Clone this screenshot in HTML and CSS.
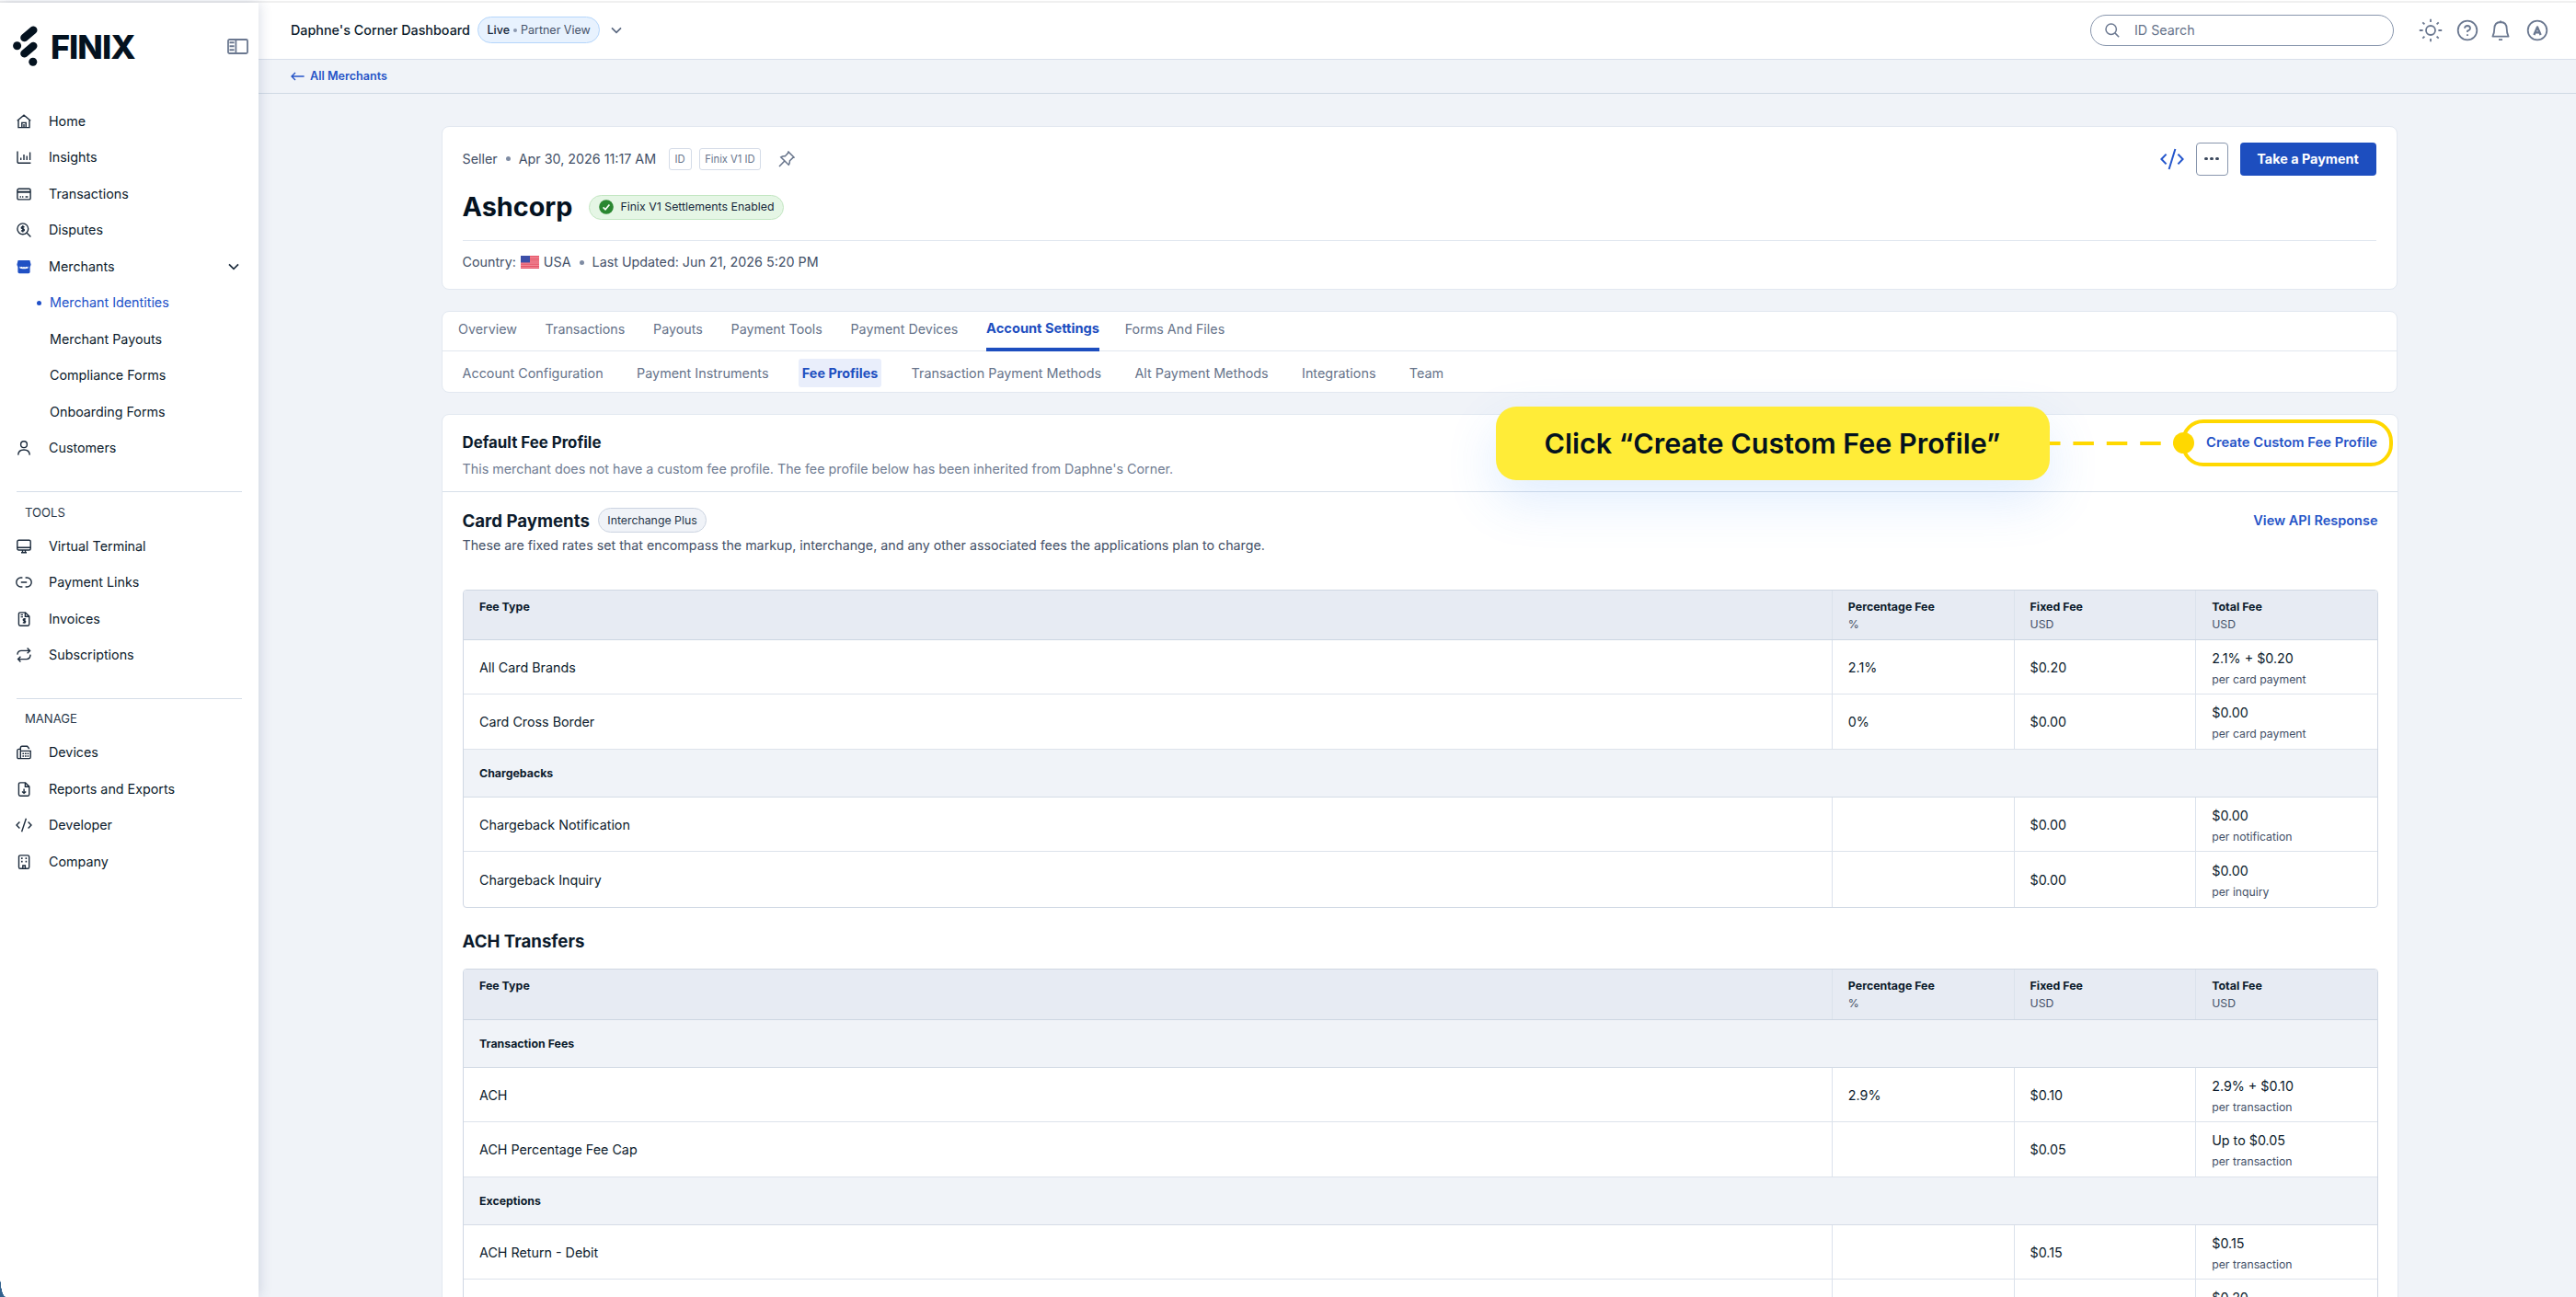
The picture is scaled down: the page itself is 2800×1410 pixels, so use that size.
FILE: index.html
```html
<!DOCTYPE html>
<html lang="en">
<head>
<meta charset="UTF-8">
<meta name="viewport" content="width=device-width, initial-scale=1.0">
<title>Ashcorp - Fee Profiles</title>
<link rel="stylesheet" href="styles.css">
</head>
<body>
<div class="top-strip"></div>
<div class="app">
  <aside class="sidebar">
    <div class="brand">
      <svg class="brand-mark" viewBox="0 0 27 44">
        <path d="M12.5 13L22.2 4.8" stroke="#04121f" stroke-width="8.6" stroke-linecap="round"/>
        <path d="M12.5 30.2L22.2 22" stroke="#04121f" stroke-width="8.6" stroke-linecap="round"/>
        <circle cx="4.6" cy="21.7" r="4.5"/>
        <circle cx="21.8" cy="39.2" r="4.5"/>
      </svg>
      <span class="brand-name">FINIX</span>
      <svg class="collapse" viewBox="0 0 23 17" stroke="#6b7890" stroke-width="1.8">
        <rect x="1" y="1" width="21" height="15" rx="1.5"/>
        <path d="M9.4 1V16"/>
        <path d="M2.5 4.3H7.6M2.5 8.3H7.6M2.5 12.3H7.6" stroke-width="2"/>
      </svg>
    </div>

    <nav class="menu">
      <a class="item"><svg class="icon" viewBox="0 0 16 16"><path d="M.8 7.2L8 1.2l7.2 6M2 6.4V14.6H14V6.4M5.8 14.4V9.4h4.4v5M8 11v3"/></svg>Home</a>
      <a class="item"><svg class="icon" viewBox="0 0 16 16"><path d="M1 1.5V12.4Q1 14.3 3 14.3H15.4M4.7 11V8.4M8 11V5M11.2 11V6.6M14.6 11V2.5"/></svg>Insights</a>
      <a class="item"><svg class="icon" viewBox="0 0 16 16"><rect x=".9" y="2.3" width="14.2" height="11.6" rx="1.5"/><path d="M1 5.7H15" stroke-width="2"/><path d="M3.6 11H5M6 11H7.4M9.6 11H12.4"/></svg>Transactions</a>
      <a class="item"><svg class="icon" viewBox="0 0 16 16"><circle cx="6.8" cy="6.8" r="5.9"/><path d="M11.2 11.2L15.4 15.4M8.6 5Q6.8 3.9 5.5 4.9 4.7 6.4 6.8 6.8 9 7.3 8.1 8.7 6.8 9.7 5 8.7M6.8 3V10.6"/></svg>Disputes</a>
      <a class="item"><svg class="icon icon-shop" viewBox="0 0 16 16"><path d="M1.6 1H14.4L15.6 5.6Q15.7 7.6 13.6 8.2 11.8 8.4 10.9 7.3 9.6 8.4 8 8.3 6.4 8.4 5.1 7.3 4.2 8.4 2.4 8.2.3 7.6.4 5.6Z"/><path d="M1.4 7H14.6V13.6Q14.6 15.2 13 15.2H3Q1.4 15.2 1.4 13.6Z"/><path class="awning" d="M3.4 7.6Q4.4 8.9 5.6 7.8 6.6 9.2 8 8.1 9.4 9.2 10.4 7.8 11.6 8.9 12.6 7.6V9.6Q10.4 10.6 8 10.2 5.6 10.6 3.4 9.6Z"/></svg>Merchants<svg class="caret" viewBox="0 0 12 8"><path d="M1 1.4L6 6.4 11 1.4"/></svg></a>
      <a class="item sub active">Merchant Identities</a>
      <a class="item sub">Merchant Payouts</a>
      <a class="item sub">Compliance Forms</a>
      <a class="item sub">Onboarding Forms</a>
      <a class="item"><svg class="icon" viewBox="0 0 16 16"><circle cx="8" cy="4.2" r="3.4"/><path d="M1.7 15.6Q2 10 8 10 14 10 14.3 15.6"/></svg>Customers</a>
    </nav>

    <nav class="menu group">
      <div class="group-title">TOOLS</div>
      <a class="item"><svg class="icon" viewBox="0 0 16 16"><rect x=".8" y="1.2" width="14.4" height="10.8" rx="1.5"/><path d="M1 9.2H15M5 14.8H11M6.5 12V14.6M9.5 12V14.6"/></svg>Virtual Terminal</a>
      <a class="item"><svg class="icon icon-wide" viewBox="0 0 18 16"><path d="M7.4 3H5.6A4.8 5 0 0 0 5.6 13H7.4M10.6 3H12.4A4.8 5 0 0 1 12.4 13H10.6M5.8 8H12.2"/></svg>Payment Links</a>
      <a class="item"><svg class="icon" viewBox="0 0 16 16"><path d="M4 .9H9.6L13.8 5V13.6Q13.8 15.2 12.3 15.2H4Q2.4 15.2 2.4 13.6V2.4Q2.4.9 4 .9ZM9.4 1V5.2H13.6M4.6 3.4H7M4.6 5.6H7M10 8.2Q8.4 7.3 7.4 8.2 6.8 9.4 8.3 9.8 10.2 10.2 9.4 11.6 8.3 12.4 6.8 11.6M8.4 7V12.8"/></svg>Invoices</a>
      <a class="item"><svg class="icon" viewBox="0 0 16 16"><path d="M.9 7.6Q1.2 3.4 5.2 3.4H14.6M11.6.6L14.6 3.4 11.6 6.2M15.1 7.6Q14.8 12.6 10.8 12.6H1.6M4.4 9.8L1.6 12.6 4.4 15.4"/></svg>Subscriptions</a>
    </nav>

    <nav class="menu group">
      <div class="group-title">MANAGE</div>
      <a class="item"><svg class="icon" viewBox="0 0 16 16"><path d="M4.3 14.6V3Q4.3 1.2 6 1.2H11.6L13.8 4M4.3 6.4H15.2V13Q15.2 14.6 13.8 14.6H2.2Q.8 14.6.8 13V5.8Q.8 4.6 2.4 4.4H4"/><path d="M6.4 9.2H13.4M6.4 12H13.4" stroke-dasharray="1.7 .9"/></svg>Devices</a>
      <a class="item"><svg class="icon" viewBox="0 0 16 16"><path d="M4 .9H9.6L13.8 5V13.6Q13.8 15.2 12.3 15.2H4Q2.4 15.2 2.4 13.6V2.4Q2.4.9 4 .9ZM9.4 1V5.2H13.6M8.1 7.6V12M6 10.4L8.1 12.4 10.2 10.4"/></svg>Reports and Exports</a>
      <a class="item"><svg class="icon icon-wide" viewBox="0 0 18 16"><path d="M4.4 4.4L1 8l3.4 3.6M13.6 4.4L17 8l-3.4 3.6M11.4.8L6.6 15.2"/></svg>Developer</a>
      <a class="item"><svg class="icon" viewBox="0 0 16 16"><rect x="2.5" y=".9" width="11.2" height="14.4" rx="1.6"/><path d="M6.8 15V12H9.4V15"/><path d="M5 4.2H6.6M9.6 4.2H11.2M5 7.6H6.6M9.6 7.6H11.2" stroke-width="1.7"/></svg>Company</a>
    </nav>
    <span class="corner"></span>
  </aside>

  <div class="main">
    <header class="topbar">
      <span class="dash-name">Daphne's Corner Dashboard</span>
      <span class="env"><b>Live</b> <i></i> Partner View</span>
      <svg class="caret caret-gray" viewBox="0 0 12 8"><path d="M1 1.4L6 6.4 11 1.4"/></svg>
      <div class="search">
        <svg viewBox="0 0 16 16"><circle cx="6.7" cy="6.7" r="5.7"/><path d="M10.9 10.9L15.2 15.2"/></svg>
        ID Search
      </div>
      <div class="top-icons">
        <svg viewBox="0 0 26 26"><circle cx="13" cy="13" r="5"/><path d="M13 .8V4M13 22V25.2M.8 13H4.6M21.4 13H25.2M4.3 4.3L6.4 6.4M19.6 19.6L21.7 21.7M21.7 4.3L19.6 6.4M6.4 19.6L4.3 21.7"/></svg>
        <svg viewBox="0 0 26 26"><circle cx="13" cy="13" r="10.3"/><path d="M10 10.8Q10.2 8 13 8 15.9 8.1 16 10.7 15.9 12.6 13 13.6V15M13 17.2V19"/></svg>
        <svg class="bell" viewBox="0 0 26 26"><path d="M4.4 19.6Q6.3 16 6.3 11 6.5 4.2 13 4 19.5 4.2 19.7 11 19.7 16 21.6 19.6ZM13 2.4V4M11 23.2H15"/></svg>
        <svg viewBox="0 0 26 26"><circle cx="13" cy="13" r="10.3"/><path d="M9.4 18L13 9.4 16.6 18M10.6 15.4H15.4" stroke-width="2.4"/></svg>
      </div>
    </header>
    <div class="crumb">
      <svg viewBox="0 0 15 10"><path d="M14.6 5H1M5 1L1 5 5 9"/></svg>
      All Merchants
    </div>

    <div class="content">
      <section class="card profile">
        <div class="meta">
          <span>Seller</span><i class="dot"></i><span>Apr 30, 2026 11:17 AM</span>
          <span class="tag tag-id">ID</span><span class="tag">Finix V1 ID</span>
          <svg class="pin" viewBox="0 0 18 18"><path d="M11 1L17 7 15.6 7.6 12.4 10.8Q12.6 13.4 11.2 15.2L2.8 6.8Q5 5.4 7.4 5.8L10.4 2.6ZM6.6 11.2L1 17"/></svg>
          <div class="actions">
            <svg class="code" viewBox="0 0 26 24"><path d="M6.6 6.6L1.4 12l5.2 5.4M19.4 6.6L24.6 12l-5.2 5.4M16.4 1L9.6 23"/></svg>
            <button class="more"><i></i><i></i><i></i></button>
            <button class="pay">Take a Payment</button>
          </div>
        </div>
        <div class="title-row">
          <h1>Ashcorp</h1>
          <span class="badge"><svg viewBox="0 0 16 16"><circle cx="8" cy="8" r="7.8" fill="#2a8731"/><path d="M4.6 8.4L7 10.8 11.4 5.4" fill="none" stroke="#fff" stroke-width="1.6"/></svg>Finix V1 Settlements Enabled</span>
        </div>
        <div class="info">
          <span>Country:</span>
          <svg class="flag" viewBox="0 0 20 14"><rect width="20" height="14" fill="#f3a0ab"/><path d="M0 .6H20M0 2.8H20M0 4.9H20M0 7H20M0 9.2H20M0 11.3H20M0 13.4H20" stroke="#e54d62" stroke-width="1.2"/><rect width="10" height="7.4" fill="#3c4fa8"/></svg>
          <span>USA</span><i class="dot"></i><span>Last Updated: Jun 21, 2026 5:20 PM</span>
        </div>
      </section>

      <section class="card tabs-card">
        <div class="tabs">
          <a>Overview</a><a>Transactions</a><a>Payouts</a><a>Payment Tools</a><a>Payment Devices</a><a class="on">Account Settings</a><a>Forms And Files</a>
        </div>
        <div class="subtabs">
          <a>Account Configuration</a><a>Payment Instruments</a><a class="on">Fee Profiles</a><a>Transaction Payment Methods</a><a>Alt Payment Methods</a><a>Integrations</a><a>Team</a>
        </div>
      </section>

      <section class="card fees">
        <div class="fees-head">
          <div>
            <h3>Default Fee Profile</h3>
            <p>This merchant does not have a custom fee profile. The fee profile below has been inherited from Daphne's Corner.</p>
          </div>
          <a class="link create">Create Custom Fee Profile</a>
        </div>

        <div class="callout">
          <div class="callout-box">Click “Create Custom Fee Profile”</div>
          <svg class="callout-line" viewBox="0 0 135 4"><path d="M-11 2H135" stroke="#ffd800" stroke-width="4" stroke-dasharray="22.5 13.9"/></svg>
          <div class="callout-ring"></div>
          <i class="callout-dot"></i>
        </div>

        <div class="fees-body">
          <div class="section-head">
            <h2>Card Payments</h2><span class="chip">Interchange Plus</span>
            <a class="link">View API Response</a>
          </div>
          <p class="desc">These are fixed rates set that encompass the markup, interchange, and any other associated fees the applications plan to charge.</p>

          <div class="table">
            <div class="row head"><div>Fee Type</div><div>Percentage Fee<small>%</small></div><div>Fixed Fee<small>USD</small></div><div>Total Fee<small>USD</small></div></div>
            <div class="row"><div>All Card Brands</div><div>2.1%</div><div>$0.20</div><div>2.1% + $0.20<small>per card payment</small></div></div>
            <div class="row"><div>Card Cross Border</div><div>0%</div><div>$0.00</div><div>$0.00<small>per card payment</small></div></div>
            <div class="row-title">Chargebacks</div>
            <div class="row"><div>Chargeback Notification</div><div></div><div>$0.00</div><div>$0.00<small>per notification</small></div></div>
            <div class="row"><div>Chargeback Inquiry</div><div></div><div>$0.00</div><div>$0.00<small>per inquiry</small></div></div>
          </div>

          <h2 class="ach">ACH Transfers</h2>
          <div class="table">
            <div class="row head"><div>Fee Type</div><div>Percentage Fee<small>%</small></div><div>Fixed Fee<small>USD</small></div><div>Total Fee<small>USD</small></div></div>
            <div class="row-title">Transaction Fees</div>
            <div class="row"><div>ACH</div><div>2.9%</div><div>$0.10</div><div>2.9% + $0.10<small>per transaction</small></div></div>
            <div class="row"><div>ACH Percentage Fee Cap</div><div></div><div>$0.05</div><div>Up to $0.05<small>per transaction</small></div></div>
            <div class="row-title">Exceptions</div>
            <div class="row"><div>ACH Return - Debit</div><div></div><div>$0.15</div><div>$0.15<small>per transaction</small></div></div>
            <div class="row"><div></div><div></div><div></div><div>$0.20<small>&nbsp;</small></div></div>
          </div>
        </div>
      </section>
    </div>
  </div>
</div>
</body>
</html>
```
FILE: styles.css
```css
* {
  box-sizing: border-box;
}
body {
  margin: 0;
  height: 1410px;
  overflow: hidden;
  font-family: Inter, "Liberation Sans", sans-serif;
  font-size: 14.3px;
  line-height: 20px;
  color: #0c1b2c;
  background: #f0f3f8;
}
h1, h2, h3, p {
  margin: 0;
}
svg {
  display: block;
  flex: none;
  fill: none;
}
.top-strip {
  height: 3px;
  background: #f0f0f0;
  border-top: 1px solid #fff;
}
.app {
  display: flex;
  height: 1407px;
}

/* sidebar */
.sidebar {
  position: relative;
  z-index: 1;
  width: 281px;
  flex: none;
  background: #fff;
  box-shadow: 0 0 14px rgba(40, 60, 110, 0.2);
}
.brand {
  display: flex;
  align-items: center;
  height: 94px;
  padding: 0 11px 0 14px;
}
.brand-mark {
  width: 27px;
  height: 44px;
  fill: #04121f;
}
.brand-name {
  margin: 2px 0 0 14px;
  font-size: 36px;
  line-height: 44px;
  font-weight: 800;
  letter-spacing: -1px;
  color: #04121f;
}
.collapse {
  width: 23px;
  height: 17px;
  margin-left: auto;
}
.menu {
  padding-top: 14.8px;
}
.item {
  display: flex;
  align-items: center;
  height: 39.55px;
  padding: 0 21px 0 18px;
}
.icon {
  width: 16px;
  height: 16px;
  margin-right: 19px;
  stroke: #1c2b3c;
  stroke-width: 1.4;
}
.icon-wide {
  width: 18px;
  margin-right: 18px;
  margin-left: -1px;
}
.icon-shop {
  fill: #2050c4;
  stroke: none;
}
.awning {
  fill: #fff;
}
.caret {
  width: 12px;
  height: 8px;
  margin-left: auto;
  stroke: #1c2b3c;
  stroke-width: 1.7;
}
.sub {
  padding-left: 54px;
}
.active {
  color: #2050c8;
}
.active::before {
  content: "";
  width: 5px;
  height: 5px;
  margin: 0 9px 0 -14px;
  border-radius: 50%;
  background: #2050c8;
}
.group {
  margin: 27px 18px 0;
  padding-top: 10.5px;
  border-top: 1px solid #d5dde8;
}
.group .item {
  padding: 0;
}
.group-title {
  height: 28px;
  padding-left: 9px;
  font-size: 13.1px;
  line-height: 22px;
  color: #2a394b;
}
.corner {
  position: absolute;
  left: 0;
  bottom: 0;
  width: 6px;
  height: 26px;
  background: radial-gradient(ellipse 6px 26px at 100% 0, transparent 97%, #33628f);
}

/* top bar */
.main {
  flex: 1;
  min-width: 0;
}
.topbar {
  display: flex;
  align-items: center;
  height: 62px;
  padding: 0 29px 2px 35px;
  background: #fff;
  border-bottom: 1px solid #d9e0ea;
}
.dash-name {
  font-weight: 500;
  font-size: 14.35px;
}
.env {
  display: flex;
  align-items: center;
  gap: 4px;
  height: 29px;
  margin: 0 12px 0 8.5px;
  padding: 0 9px;
  border: 1px solid #b5d6fb;
  border-radius: 15px;
  background: #e8f2fe;
  font-size: 12.5px;
  color: #46536a;
}
.env b {
  font-weight: 500;
  color: #16263a;
}
.env i {
  width: 4px;
  height: 4px;
  border-radius: 50%;
  background: #8b99b0;
}
.caret-gray {
  margin: 0;
  stroke: #5a6880;
}
.search {
  display: flex;
  align-items: center;
  width: 330px;
  height: 34px;
  margin-left: auto;
  padding-left: 15px;
  border: 1px solid #8896ad;
  border-radius: 17px;
  color: #66738a;
}
.search svg {
  width: 16px;
  height: 16px;
  margin-right: 16px;
  stroke: #6b7890;
  stroke-width: 1.5;
}
.top-icons {
  display: flex;
  gap: 14px;
  margin-left: 27px;
}
.top-icons svg {
  width: 26px;
  height: 26px;
  stroke: #6b7890;
  stroke-width: 1.8;
  stroke-linejoin: round;
}
.top-icons .bell {
  margin-left: -4px;
}
.crumb {
  display: flex;
  align-items: center;
  height: 36.5px;
  padding-left: 35px;
  border-bottom: 1.5px solid #cfd9e4;
  font-size: 12.6px;
  font-weight: 600;
  color: #2654c7;
}
.crumb svg {
  width: 15px;
  height: 10px;
  margin-right: 6px;
  stroke: #2654c7;
  stroke-width: 1.4;
}

/* cards */
.content {
  width: 2126px;
  margin: 35.5px 0 0 199px;
}
.card {
  margin-bottom: 23px;
  background: #fff;
  border: 1.5px solid #e2e8f0;
  border-radius: 8px;
}
.profile {
  height: 178px;
  padding: 16.5px 22.5px 0 21.5px;
  color: #435067;
}
.meta {
  display: flex;
  align-items: center;
  height: 36px;
}
.dot {
  width: 5px;
  height: 5px;
  margin: 0 9px;
  border-radius: 50%;
  background: #7f8ca3;
}
.tag {
  height: 24px;
  margin-left: 8.5px;
  padding: 0 5px;
  border: 1px solid #d5dce8;
  border-radius: 3px;
  font-size: 11.2px;
  line-height: 22px;
  color: #68758d;
}
.tag-id {
  margin-left: 13.5px;
  padding: 0 6px;
}
.pin {
  width: 18px;
  height: 18px;
  margin-left: 19px;
  stroke: #66738a;
  stroke-width: 1.5;
}
.actions {
  display: flex;
  align-items: center;
  margin-left: auto;
}
.code {
  width: 26px;
  height: 24px;
  stroke: #2456cc;
  stroke-width: 2;
}
.more {
  display: flex;
  align-items: center;
  justify-content: center;
  gap: 2.5px;
  width: 35px;
  height: 36px;
  margin: 0 13px;
  border: 1px solid #8896ad;
  border-radius: 4px;
  background: #fff;
}
.more i {
  width: 3.4px;
  height: 3.4px;
  border-radius: 50%;
  background: #3b485c;
}
.pay {
  width: 148px;
  height: 36px;
  padding: 0;
  border: 0;
  border-radius: 4px;
  background: #1d4ebf;
  font: 700 14.4px Inter, sans-serif;
  color: #fff;
}
.title-row {
  display: flex;
  align-items: center;
  height: 71.5px;
  padding-bottom: 1px;
  border-bottom: 1.5px solid #e1e7ef;
}
h1 {
  font-size: 28.8px;
  line-height: 40px;
  color: #04121f;
}
.badge {
  display: flex;
  align-items: center;
  height: 27px;
  margin-left: 18px;
  padding: 0 10px;
  border: 1px solid #c3e6c2;
  border-radius: 14px;
  background: #e5f6e5;
  font-size: 12.35px;
  color: #16263a;
}
.badge svg {
  width: 16px;
  height: 16px;
  margin-right: 7px;
}
.info {
  display: flex;
  align-items: center;
  height: 46px;
}
.flag {
  width: 20px;
  height: 14px;
  margin: 0 4.5px 0 5.5px;
}

/* tabs */
.tabs-card {
  height: 89px;
}
.tabs {
  display: flex;
  gap: 30.7px;
  height: 43px;
  padding-left: 17px;
  border-bottom: 1px solid #e1e7ef;
  color: #66738a;
}
.tabs a {
  height: 43px;
  line-height: 37px;
}
.tabs .on {
  border-bottom: 4px solid #1d4ebf;
  font-size: 14.65px;
  font-weight: 700;
  color: #1d4ebf;
  margin-right: -3px;
}
.subtabs {
  display: flex;
  gap: 36.3px;
  height: 44px;
  align-items: center;
  padding: 3px 0 0 21.5px;
  font-size: 14.38px;
  color: #66738a;
}
.subtabs .on {
  margin: 0 -4px;
  padding: 0 4px;
  border-radius: 3px;
  line-height: 31px;
  background: #e9eefb;
  font-weight: 700;
  color: #1d4ebf;
}

/* fee profile */
.fees {
  position: relative;
  width: 2127px;
  height: 1000px;
}
.fees-head {
  display: flex;
  justify-content: space-between;
  height: 84px;
  padding: 18.5px 22px 0 21.5px;
  border-bottom: 1.5px solid #d7dfe9;
}
h3 {
  font-size: 16.85px;
  line-height: 22px;
  font-weight: 700;
  color: #0c1b2c;
}
.fees-head p {
  margin-top: 8px;
  line-height: 19px;
  color: #717d93;
}
.link {
  margin-left: auto;
  font-size: 14.5px;
  font-weight: 600;
  color: #2654c7;
}
.create {
  padding-top: 1px;
  font-size: 14.76px;
}
.fees-body {
  padding: 17px 21.5px 0;
}
.section-head {
  display: flex;
  align-items: center;
  height: 27px;
}
h2 {
  font-size: 18.65px;
  line-height: 26px;
}
.chip {
  height: 27px;
  margin-left: 9.5px;
  padding: 0 9px;
  border: 1px solid #ccd4e1;
  border-radius: 14px;
  background: #f0f3f8;
  font-size: 12.3px;
  line-height: 25px;
  color: #26364a;
}
.desc {
  margin: 4px 0 37.5px;
  font-size: 14.25px;
  color: #435067;
}

.table {
  border: 1.5px solid #cfd7e3;
  border-radius: 4px;
  overflow: hidden;
}
.row {
  display: grid;
  grid-template-columns: 1fr 197.7px 197.7px 197.3px;
  height: 59.4px;
  border-bottom: 1px solid #dde3eb;
}
.row:last-child {
  border-bottom: 0;
}
.row > div {
  display: flex;
  flex-direction: column;
  justify-content: center;
  padding: 1.5px 0 0 17px;
  border-left: 1px solid #dbe2ec;
}
.row > div:first-child {
  padding-left: 17.5px;
  border-left: 0;
}
.row > div:last-child {
  padding-top: 4px;
}
.row small {
  margin-top: 3px;
  font-size: 12.25px;
  color: #435067;
}
.row.head {
  height: 54.5px;
  border-bottom: 1.5px solid #cdd6e2;
  background: #e7ebf3;
  font-size: 12.4px;
  font-weight: 700;
}
.row.head > div {
  justify-content: flex-start;
  padding-top: 8px;
}
.row.head small {
  margin: 0;
  font-weight: 400;
  line-height: 18px;
}
.row-title {
  height: 52.2px;
  padding-left: 17.5px;
  border-bottom: 1.5px solid #d5dce6;
  background: #f0f3f8;
  font-size: 12.35px;
  line-height: 52px;
  font-weight: 700;
}
.ach {
  margin: 23px 0 17.5px;
}

/* callout laid over the fee card */
.callout {
  position: absolute;
  left: 1144.5px;
  top: -9.5px;
  display: flex;
  align-items: center;
}
.callout-box {
  width: 602px;
  height: 80px;
  border-radius: 22px;
  background: #ffec38;
  box-shadow: 0 22px 55px rgba(60, 140, 250, 0.16);
  text-align: center;
  font-size: 30.5px;
  line-height: 79px;
  font-weight: 600;
  color: #04121f;
}
.callout-line {
  width: 135px;
  height: 4px;
}
.callout-ring {
  width: 230px;
  height: 51px;
  margin-left: 8.5px;
  border: 4.5px solid #ffd800;
  border-radius: 24px;
}
.callout-dot {
  position: absolute;
  left: 736px;
  width: 23px;
  height: 23px;
  border-radius: 50%;
  background: #ffd800;
}
```
